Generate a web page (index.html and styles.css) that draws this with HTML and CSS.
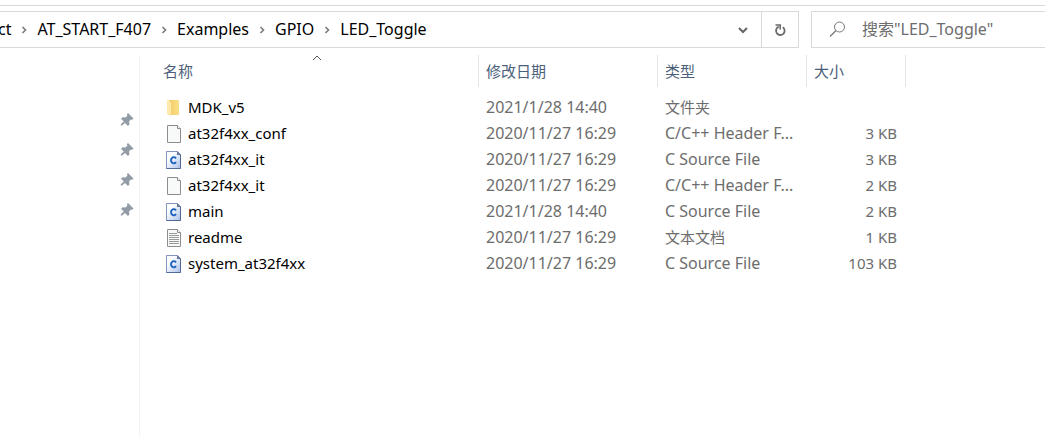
FILE: index.html
```html
<!DOCTYPE html>
<html lang="zh-CN">
<head>
<meta charset="UTF-8">
<meta name="viewport" content="width=device-width,initial-scale=1.0" />
<title>LED_Toggle</title>
<link rel="stylesheet" href="styles.css">
</head>
<body>
<!-- shared icons -->
<svg class="defs" aria-hidden="true">
	<linearGradient id="blue" x1="0" y1="0" x2="1" y2="1">
		<stop offset="0.3" stop-color="#fdfeff"/><stop offset="1" stop-color="#a9bfe8"/>
	</linearGradient>
	<linearGradient id="gold" x1="0" y1="0" x2="1" y2="0">
		<stop offset="0" stop-color="#f3cd68"/><stop offset="1" stop-color="#fbdf86"/>
	</linearGradient>
	<symbol id="i-pin" viewBox="0 0 14 14">
		<path d="M8 0l5.500 5.500-1.200 1.300-1.300-.2-2 2 .5 2.700-1.500 1.700-3-3L2 12.500H.8v-1.200L3.800 8.500 1 5.700l1.500-1.500 3 .3 2-2L6.800 1.200z" fill="#919ca6"/>
	</symbol>
	<symbol id="i-next" viewBox="0 0 6 8">
		<path d="M1.500 1l3 3-3 3" fill="none" stroke="#7a7a7a" stroke-width="1.600"/>
	</symbol>
	<symbol id="i-folder" viewBox="0 0 16 18">
		<path d="M3 1h10v15H3z" fill="url(#gold)"/>
		<path d="M1 1l4 2v14l-4-2z" fill="#fde9a9"/>
	</symbol>
	<symbol id="i-page" viewBox="0 0 16 18">
		<path d="M1.500.5h10l3 3v14h-13z" fill="#f8f9f9" stroke="#8d8d8d"/>
		<path d="M11.500.5v3h3" fill="#fff" stroke="#8d8d8d"/>
	</symbol>
	<symbol id="i-text" viewBox="0 0 16 18">
		<use href="#i-page"/>
		<path d="M3 4.500h8M3 6.500h10M3 8.500h10M3 10.500h10M3 12.500h10M3 14.500h10" stroke="#999"/>
	</symbol>
	<symbol id="i-c" viewBox="0 0 16 18">
		<path d="M.5.500h11l3 3v14H.5z" fill="url(#blue)" stroke="#8296bd"/>
		<path d="M.5 17.500h14v-14" fill="none" stroke="#526a96"/>
		<path d="M11 0l4 4h-4z" fill="#66799c"/>
		<path d="M10 7.500A2.700 3.100 0 1 0 10 11" fill="none" stroke="#1b61bd" stroke-width="1.900"/>
	</symbol>
</svg>

<header class="toolbar">
	<nav class="address" aria-label="地址">
		<button class="crumb">ct</button>
		<svg class="next"><use href="#i-next"/></svg>
		<button class="crumb">AT_START_F407</button>
		<svg class="next"><use href="#i-next"/></svg>
		<button class="crumb">Examples</button>
		<svg class="next"><use href="#i-next"/></svg>
		<button class="crumb">GPIO</button>
		<svg class="next"><use href="#i-next"/></svg>
		<button class="crumb">LED_Toggle</button>
		<button class="tool history" aria-label="以前的位置">
			<svg width="10" height="8" viewBox="0 0 10 8"><path d="M1 2l4 4 4-4" fill="none" stroke="#666" stroke-width="2"/></svg>
		</button>
		<button class="tool refresh" aria-label="刷新">
			<svg width="12" height="14" viewBox="0 0 12 14"><path d="M8.800 4.200A4.300 4.300 0 1 1 4.800 3.700" fill="none" stroke="#6b6b6b" stroke-width="1.800"/><path d="M1.500 2h4.700v4.500" fill="none" stroke="#6b6b6b" stroke-width="1.600"/></svg>
		</button>
	</nav>
	<label class="search">
		<svg width="17" height="17" viewBox="0 0 17 17"><circle cx="10.500" cy="6" r="5" fill="none" stroke="#777"/><path d="M7 9.500L1 15.500" stroke="#777" stroke-width="1.200"/></svg>
		<input type="search" aria-label="搜索" placeholder="搜索&quot;LED_Toggle&quot;">
	</label>
</header>

<div class="window">
	<aside class="sidebar">
		<ul class="pins">
			<li><svg><use href="#i-pin"/></svg></li>
			<li><svg><use href="#i-pin"/></svg></li>
			<li><svg><use href="#i-pin"/></svg></li>
			<li><svg><use href="#i-pin"/></svg></li>
		</ul>
	</aside>
	<main class="content">
		<table class="files">
			<thead>
				<tr>
					<th class="name" aria-sort="ascending"><button>名称<svg class="sort" width="10" height="6" viewBox="0 0 10 6"><path d="M1 5l4-4 4 4" fill="none" stroke="#555"/></svg></button></th>
					<th class="date"><button>修改日期</button></th>
					<th class="type"><button>类型</button></th>
					<th class="size"><button>大小</button></th>
				</tr>
			</thead>
			<tbody>
				<tr><td><svg><use href="#i-folder"/></svg>MDK_v5</td><td>2021/1/28 14:40</td><td class="cn">文件夹</td><td></td></tr>
				<tr><td><svg><use href="#i-page"/></svg>at32f4xx_conf</td><td>2020/11/27 16:29</td><td>C/C++ Header F...</td><td>3 KB</td></tr>
				<tr><td><svg><use href="#i-c"/></svg>at32f4xx_it</td><td>2020/11/27 16:29</td><td>C Source File</td><td>3 KB</td></tr>
				<tr><td><svg><use href="#i-page"/></svg>at32f4xx_it</td><td>2020/11/27 16:29</td><td>C/C++ Header F...</td><td>2 KB</td></tr>
				<tr><td><svg><use href="#i-c"/></svg>main</td><td>2021/1/28 14:40</td><td>C Source File</td><td>2 KB</td></tr>
				<tr><td><svg><use href="#i-text"/></svg>readme</td><td>2020/11/27 16:29</td><td class="cn">文本文档</td><td>1 KB</td></tr>
				<tr><td><svg><use href="#i-c"/></svg>system_at32f4xx</td><td>2020/11/27 16:29</td><td>C Source File</td><td>103 KB</td></tr>
			</tbody>
		</table>
	</main>
</div>
</body>
</html>
```
FILE: styles.css
```css
* { box-sizing:border-box; }
html,body,ul { margin:0; padding:0; }
body { min-height:100vh; display:flex; flex-direction:column; background:#fff; color:#000; font:15px/20px "Noto Sans","Noto Sans CJK SC",sans-serif; }
button { margin:0; padding:0; border:0; background:none; color:inherit; font:inherit; }
svg { flex:none; }
.defs { position:absolute; width:0; height:0; }

/* address bar and search */
.toolbar { display:flex; gap:12px; margin-top:5px; padding:5px 0 7px; border-top:1px solid #d9d9d9; font-size:16px; }
.address { flex:1; display:flex; align-items:center; height:37px; margin-left:-2px; border:1px solid #d9d9d9; border-left:0; }
.crumb { padding-bottom:1px; }
.next { width:6px; height:8px; margin:0 10px; }
.tool { display:flex; align-items:center; justify-content:center; align-self:stretch; width:36px; }
.history { margin-left:auto; }
.refresh { width:37px; border-left:1px solid #d9d9d9; }
.search { flex:0 0 234px; min-width:0; display:flex; align-items:center; gap:16px; padding-left:17px; border:1px solid #d9d9d9; border-right:0; }
.search input { flex:1; width:100%; min-width:0; padding:0 0 1px; border:0; outline:0; background:none; font:inherit; }
.search input::placeholder { color:#6d6d6d; opacity:1; }

.window { flex:1; display:flex; }
.sidebar { width:140px; border-right:1px solid #f3f3f3; }
.pins { display:flex; flex-direction:column; align-items:flex-end; gap:16px; padding:58px 5px 0 0; list-style:none; }
.pins li,.pins svg { display:block; width:14px; height:14px; }

/* file list */
.content { flex:1; }
.files { table-layout:fixed; width:766px; border-collapse:collapse; }
.files th { padding:0 0 7px; font-weight:normal; }
.files th button { position:relative; display:block; width:100%; height:32px; padding-left:7px; border-right:1px solid #e5e5e5; color:#4c607a; text-align:left; }
.files .name { width:339px; padding-left:16px; }
.files .date { width:179px; }
.files .type { width:149px; }
.files .size { width:99px; }
.sort { position:absolute; top:0; left:50%; margin-left:-5px; }
.files td { height:26px; padding:0 0 0 7px; color:#6d6d6d; font-size:16px; white-space:nowrap; }
.files td:first-child { padding-left:26px; color:#000; font-size:15px; }
.files td:last-child { padding-right:9px; text-align:right; font-size:15px; }
.files td.cn { font-size:15px; }
.files td svg { width:16px; height:18px; margin-right:6px; vertical-align:-4px; }
```
